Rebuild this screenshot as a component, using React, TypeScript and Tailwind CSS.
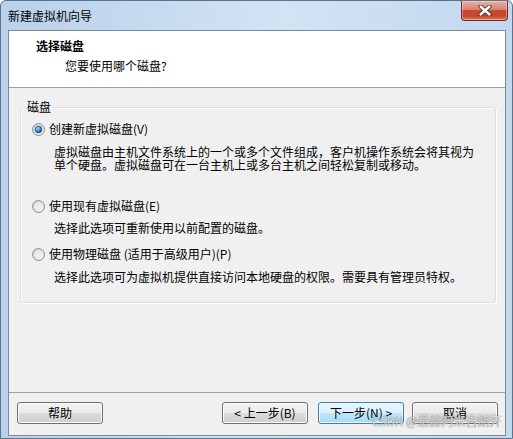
import React from "react";

function Radio({ checked, id }: { checked?: boolean; id: string }) {
  return (
    <svg width="13" height="13" viewBox="0 0 13 13" className="shrink-0">
      <defs>
        <linearGradient id={`ring-${id}`} x1="0" y1="0" x2="1" y2="1">
          <stop offset="0" stopColor="#c9c9c9" />
          <stop offset="1" stopColor="#f6f6f6" />
        </linearGradient>
        <radialGradient id={`dot-${id}`} cx="0.4" cy="0.35" r="0.7">
          <stop offset="0" stopColor="#a6dcff" />
          <stop offset="0.55" stopColor="#2f8ad6" />
          <stop offset="1" stopColor="#13447a" />
        </radialGradient>
      </defs>
      <circle cx="6.5" cy="6.5" r="6" fill={`url(#ring-${id})`} stroke="#8f8f8f" strokeWidth="1" />
      <circle cx="6.5" cy="6.5" r="4.3" fill="#f4f4f4" opacity="0.6" />
      {checked && <circle cx="6.5" cy="6.5" r="3.4" fill={`url(#dot-${id})`} stroke="#1c4f86" strokeWidth="0.6" />}
    </svg>
  );
}

function Btn({ children, primary, className = "" }: { children: React.ReactNode; primary?: boolean; className?: string }) {
  return (
    <div
      className={
        "h-[22px] w-[86px] flex items-center justify-center rounded-[3px] border text-[12px] leading-none text-black " +
        (primary
          ? "border-[#3c7fb1] bg-[linear-gradient(#eaf6fd,#d9f0fc_50%,#bee6fd_50%,#a7d9f5)] shadow-[inset_0_0_0_1px_#f0fafe] "
          : "border-[#707070] bg-[linear-gradient(#f2f2f2,#ebebeb_50%,#dddddd_50%,#cfcfcf)] shadow-[inset_0_0_0_1px_#fcfcfc] ") +
        className
      }
    >
      {children}
    </div>
  );
}

export default function App() {
  return (
    <div className="relative w-[513px] h-[439px] flex flex-col overflow-hidden rounded-t-[6px] border border-[#5d738c] bg-[linear-gradient(to_right,#b9d1eb,#d2e3f4_55%,#c2d8ef)] font-['Noto_Sans_CJK_SC',sans-serif] text-[12px] text-black">
      {/* Title bar */}
      <div className="h-[29px] shrink-0 flex items-center pl-[7px] leading-[14px]">新建虚拟机向导</div>
      <div className="absolute top-0 right-[4px] w-[47px] h-[20px] flex items-center justify-center rounded-b-[4px] border border-t-0 border-[#6b2a22] bg-[linear-gradient(#eab0a2,#d9826f_45%,#c44a32_50%,#c9452c_80%,#e07b5c)] shadow-[inset_0_0_0_1px_rgba(255,255,255,0.35)]">
        <svg width="14" height="11" viewBox="0 0 14 11">
          <path d="M2.5 1.5 L11.5 9.5 M11.5 1.5 L2.5 9.5" stroke="#3d2a28" strokeWidth="4.2" strokeLinecap="round" />
          <path d="M2.5 1.5 L11.5 9.5 M11.5 1.5 L2.5 9.5" stroke="#ffffff" strokeWidth="2.4" strokeLinecap="round" />
        </svg>
      </div>

      {/* Client */}
      <div className="flex-1 flex flex-col ml-[7px] mr-[6px] mb-[2px] border border-[#7a8a9c] bg-[#f0f0f0]">
        <div className="h-[57px] shrink-0 bg-white border-b border-[#a0a0a0] pt-[8px] pl-[27px]">
          <div className="font-bold leading-[14px]">选择磁盘</div>
          <div className="mt-[6px] pl-[29px] leading-[14px]">您要使用哪个磁盘?</div>
        </div>

        <div className="flex-1 flex flex-col">
          <div className="relative mt-[19px] ml-[11px] mr-[9px] rounded-[3px] border border-[#d5dfe5] shadow-[inset_1px_1px_0_#ffffff,1px_1px_0_#ffffff] pt-[14px] pb-[19px]">
            <div className="absolute -top-[8px] left-[5px] px-[1px] bg-[#f0f0f0] leading-[14px]">磁盘</div>

            <div className="flex items-center gap-[4px] pl-[11px] h-[14px]">
              <Radio checked id="a" />
              <span className="leading-[14px]">创建新虚拟磁盘(V)</span>
            </div>
            <div className="mt-[9px] pl-[33px] leading-[13px]">
              <div>虚拟磁盘由主机文件系统上的一个或多个文件组成，客户机操作系统会将其视为</div>
              <div>单个硬盘。虚拟磁盘可在一台主机上或多台主机之间轻松复制或移动。</div>
            </div>

            <div className="mt-[28px] flex items-center gap-[4px] pl-[11px] h-[14px]">
              <Radio id="b" />
              <span className="leading-[14px]">使用现有虚拟磁盘(E)</span>
            </div>
            <div className="mt-[8px] pl-[33px] leading-[13px]">选择此选项可重新使用以前配置的磁盘。</div>

            <div className="mt-[13px] flex items-center gap-[4px] pl-[11px] h-[14px]">
              <Radio id="c" />
              <span className="leading-[14px]">使用物理磁盘 (适用于高级用户)(P)</span>
            </div>
            <div className="mt-[9px] pl-[33px] leading-[13px]">选择此选项可为虚拟机提供直接访问本地硬盘的权限。需要具有管理员特权。</div>
          </div>
        </div>

        <div className="shrink-0 border-t border-[#a0a0a0] pt-[9px] pb-[11px] pl-[8px] pr-[7px] flex items-center">
          <Btn>帮助</Btn>
          <div className="flex-1" />
          <Btn>&lt; 上一步(B)</Btn>
          <Btn primary className="ml-[10px] w-[86px]">下一步(N) &gt;</Btn>
          <Btn className="ml-[8px]">取消</Btn>
        </div>
      </div>

      <div className="absolute left-[371px] top-[412px] leading-[16px] text-[12px] text-[rgba(255,255,255,0.75)] [text-shadow:0_0_1px_rgba(90,90,90,0.7),0_0_1px_rgba(90,90,90,0.7)] pointer-events-none">
        CSDN @悬赫阿米吉朗开
      </div>
    </div>
  );
}
